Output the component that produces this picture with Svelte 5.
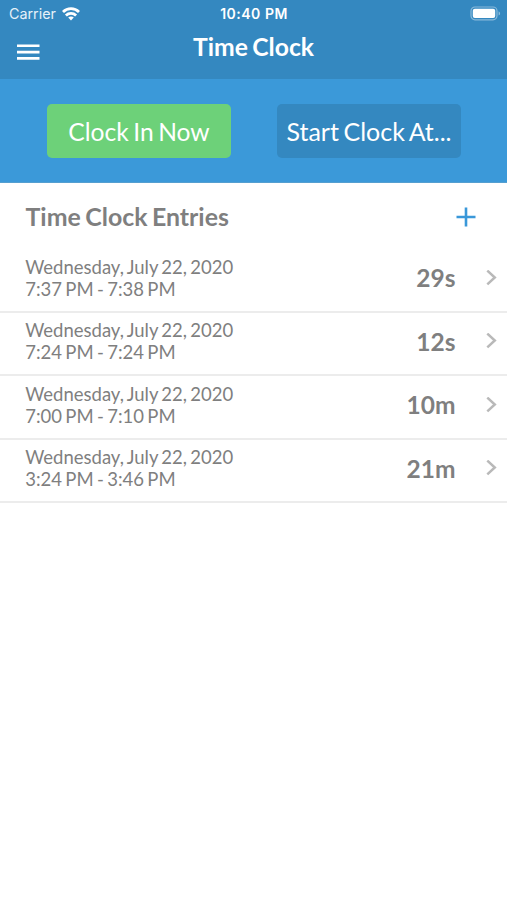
<script>
  const entries = [
    { date: 'Wednesday, July 22, 2020', range: '7:37 PM - 7:38 PM', total: '29s' },
    { date: 'Wednesday, July 22, 2020', range: '7:24 PM - 7:24 PM', total: '12s' },
    { date: 'Wednesday, July 22, 2020', range: '7:00 PM - 7:10 PM', total: '10m' },
    { date: 'Wednesday, July 22, 2020', range: '3:24 PM - 3:46 PM', total: '21m' }
  ];
</script>

<div class="screen">
  <header>
    <div class="status">
      <div class="carrier">
        <span>Carrier</span>
        <svg width="18" height="14" viewBox="0 0 18 14" fill="none" stroke="#fff" stroke-width="2.8">
          <path d="M1 5C5.5 .6 12.5 .6 17 5" />
          <path d="M3.9 8.4C6.8 5.6 11.2 5.6 14.1 8.4" />
          <path d="M6.2 10.6C7.7 9.2 10.3 9.2 11.8 10.6L9 13.6Z" fill="#fff" stroke="none" />
        </svg>
      </div>
      <span class="time">10:40 PM</span>
      <svg class="battery" width="31" height="15" viewBox="0 0 31 15">
        <rect x="1" y="1" width="26" height="12.8" rx="4" fill="none" stroke="#fff" stroke-opacity=".42" stroke-width="1.2" />
        <rect x="2.8" y="2.8" width="22.4" height="9.2" rx="2" fill="#fff" />
        <path d="M28.6 5.2C30.6 6 30.6 8.8 28.6 9.6Z" fill="#fff" opacity=".45" />
      </svg>
    </div>
    <div class="nav">
      <button class="menu" aria-label="Menu">
        <svg width="23" height="17" viewBox="0 0 23 17" fill="#fff">
          <path d="M0 .5h22.5v2.6H0zM0 6.8h22.5v2.6H0zM0 13.1h22.5v2.6H0z" />
        </svg>
      </button>
      <h1>Time Clock</h1>
    </div>
  </header>

  <div class="actions">
    <button class="in">Clock In Now</button>
    <button class="at">Start Clock At...</button>
  </div>

  <main>
    <div class="heading">
      <h2>Time Clock Entries</h2>
      <button class="add" aria-label="Add entry">
        <svg width="20" height="20" viewBox="0 0 20 20" stroke="#3a98d9" stroke-width="2.6">
          <path d="M10 .5v19M.5 10h19" />
        </svg>
      </button>
    </div>
    <ul>
      {#each entries as entry}
        <li>
          <div class="when">
            <div>{entry.date}</div>
            <div>{entry.range}</div>
          </div>
          <strong>{entry.total}</strong>
          <svg width="11" height="16" viewBox="0 0 11 16" fill="none" stroke="#b9b9b9" stroke-width="2.5">
            <path d="M1.3 .6L8.8 7.5L1.3 14.4" />
          </svg>
        </li>
      {/each}
    </ul>
  </main>
</div>

<style>
  :global(body) { margin: 0; background: #fff; }
  .screen {
    width: 507px;
    height: 900px;
    overflow: hidden;
    background: #fff;
    color: #7f7f7f;
    font-family: Lato, sans-serif;
  }
  button { border: 0; padding: 0; margin: 0; background: none; font: inherit; color: #fff; }
  svg { display: block; flex: none; }
  header { height: 79px; background: #3488c0; color: #fff; }
  .status {
    display: grid;
    grid-template-columns: 1fr auto 1fr;
    align-items: center;
    height: 27px;
    padding: 0 6px 0 9px;
    font: 15px/27px Inter, sans-serif;
  }
  .carrier { display: flex; align-items: center; gap: 6px; color: #e6f1f9; }
  .carrier span { font-size: 14.3px; }
  .time { font-size: 14px; font-weight: 600; letter-spacing: .5px; padding-right: 2px; }
  .battery { justify-self: end; }
  .nav {
    display: grid;
    grid-template-columns: 60px 1fr 60px;
    height: 52px;
  }
  .menu { padding: 17px 0 0 16.5px; align-self: start; }
  h1 { margin: 0; text-align: center; font-size: 24.7px; line-height: 39px; font-weight: 700; word-spacing: -1.6px; }
  .actions {
    display: flex;
    gap: 46px;
    box-sizing: border-box;
    height: 104px;
    padding: 24.5px 46px 0 47px;
    background: #3b99d9;
    border-bottom: 1px solid #559fd0;
  }
  .actions button {
    box-sizing: border-box;
    width: 184px;
    height: 54.5px;
    border-radius: 5px;
    font-size: 25px;
    word-spacing: -1.8px;
    white-space: nowrap;
  }
  .actions .in { background: #6dd179; font-size: 24.6px; padding-top: 2px; }
  .actions .at { background: #3488c0; }
  .heading {
    display: flex;
    justify-content: space-between;
    align-items: center;
    box-sizing: border-box;
    height: 66px;
    padding: 2px 31px 0 25.5px;
  }
  h2 { margin: 0; padding-bottom: 2px; font-size: 24.9px; line-height: 30px; font-weight: 700; word-spacing: -1.6px; }
  ul { list-style: none; margin: 0; padding: 0; }
  li {
    display: flex;
    align-items: center;
    box-sizing: border-box;
    height: 63.5px;
    padding: 0 10px 4px 25.2px;
    border-bottom: 2px solid #ececec;
  }
  .when { flex: 1; font-size: 18.5px; line-height: 22px; word-spacing: -1.4px; }
  strong { padding-top: 1px; font-size: 24.5px; line-height: 30px; font-weight: 700; margin-right: 30.5px; }
</style>
